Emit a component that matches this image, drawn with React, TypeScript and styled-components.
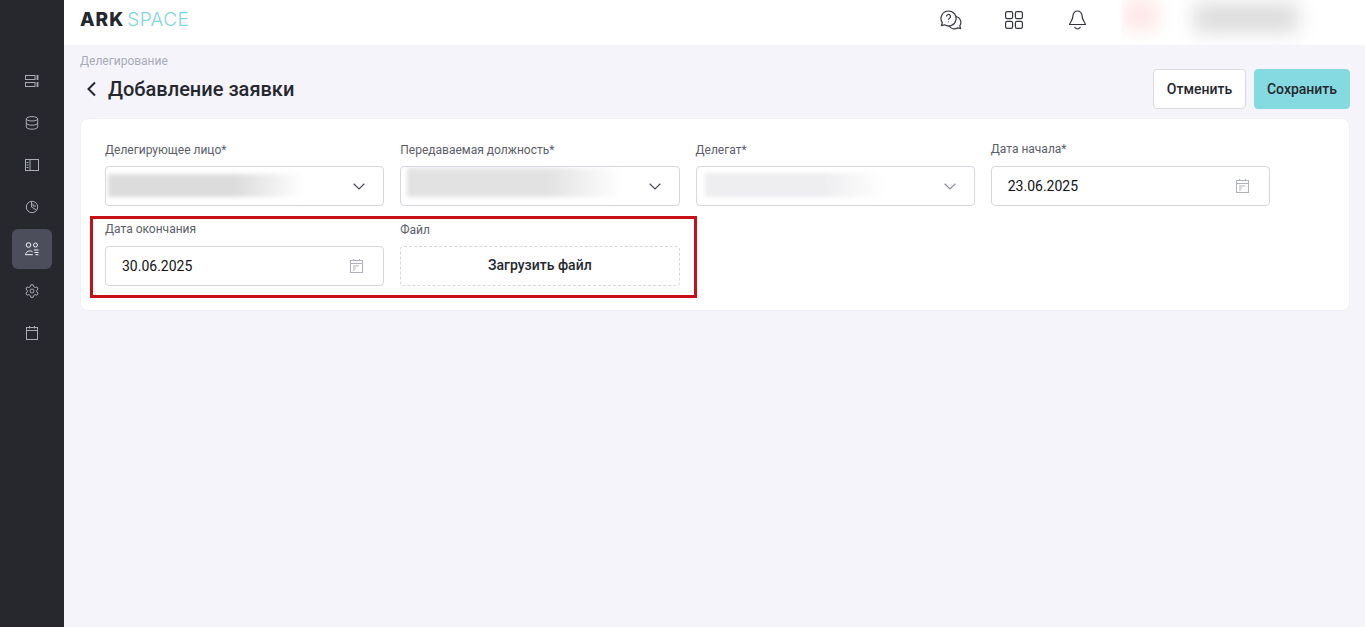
import styled, { createGlobalStyle } from 'styled-components'

const GlobalStyle = createGlobalStyle`
  html, body {
    margin: 0;
    padding: 0;
    height: 100%;
    overflow: hidden;
  }
  #root {
    height: 100%;
  }
  * {
    box-sizing: border-box;
  }
  body {
    font-family: Roboto, "Liberation Sans", sans-serif;
    background: #f4f4fa;
  }
`

const Page = styled.div`
  display: flex;
  height: 627px;
`

const Sidebar = styled.aside`
  width: 64px;
  flex: none;
  background: #26282e;
  display: flex;
  flex-direction: column;
  align-items: center;
  gap: 2px;
  padding-top: 61px;
`

const SideItem = styled.div<{ $active?: boolean }>`
  width: 40px;
  height: 40px;
  border-radius: 6px;
  display: flex;
  align-items: center;
  justify-content: center;
  color: ${p => (p.$active ? '#f2f2f6' : '#a9abb5')};
  background: ${p => (p.$active ? '#4c4e5c' : 'transparent')};
`

const Main = styled.div`
  flex: 1;
  min-width: 0;
  display: flex;
  flex-direction: column;
`

const Header = styled.header`
  height: 45px;
  flex: none;
  background: #fff;
  display: flex;
  align-items: center;
  padding: 0 16px;
`

const Logo = styled.div`
  display: flex;
  align-items: baseline;
  font-family: Inter, sans-serif;
  font-size: 19px;
  line-height: 40px;
  margin-top: -5px;
`

const LogoDark = styled.span`
  font-weight: 800;
  color: #25272e;
  letter-spacing: 1px;
`

const LogoLight = styled.span`
  font-weight: 300;
  color: #7fd6dd;
  margin-left: 3px;
  letter-spacing: 0.4px;
`

const HeaderIcons = styled.div`
  margin-left: auto;
  display: flex;
  align-items: center;
  gap: 41px;
  margin-right: 34px;
  margin-top: -5px;
  color: #33353c;
  height: 40px;
`

const HeaderIcon = styled.div`
  width: 22px;
  height: 22px;
  display: flex;
  align-items: center;
  justify-content: center;
`

const UserBlock = styled.div`
  width: 195px;
  height: 45px;
  display: flex;
  align-items: flex-start;
  overflow: hidden;
  margin-right: 32px;
`

const BlurAvatar = styled.div`
  width: 34px;
  height: 30px;
  margin-left: 2px;
  flex: none;
  background: #ffe6e6;
  filter: blur(9px);
`

const BlurName = styled.div`
  width: 104px;
  height: 28px;
  margin: 4px 0 0 36px;
  flex: none;
  background: #dadada;
  filter: blur(10px);
`

const Content = styled.main`
  flex: 1;
  padding: 8px 15px 0 16px;
`

const Breadcrumb = styled.div`
  font-size: 12px;
  line-height: 16px;
  color: #a8abb9;
`

const TitleRow = styled.div`
  display: flex;
  align-items: flex-start;
  justify-content: space-between;
  height: 49px;
`

const TitleGroup = styled.div`
  display: flex;
  align-items: center;
  gap: 9px;
  margin-top: 4px;
  padding-left: 5px;
  height: 32px;
`

const Title = styled.h1`
  margin: 0;
  font-size: 20px;
  line-height: 32px;
  font-weight: 500;
  color: #25272e;
`

const Actions = styled.div`
  display: flex;
  gap: 8px;
`

const Button = styled.button<{ $primary?: boolean; $width: number }>`
  width: ${p => p.$width}px;
  height: 40px;
  padding: 0;
  border-radius: 4px;
  font-family: inherit;
  font-size: 14px;
  font-weight: 500;
  color: #25272e;
  background: ${p => (p.$primary ? '#85d9e0' : '#fff')};
  border: 1px solid ${p => (p.$primary ? '#85d9e0' : '#d9dae2')};
`

const Card = styled.section`
  position: relative;
  background: #fff;
  border: 1px solid #f0f0f6;
  border-radius: 8px;
  padding: 23px 79px 24px 24px;
`

const FormGrid = styled.div`
  display: grid;
  grid-template-columns: repeat(4, 1fr);
  column-gap: 16px;
  row-gap: 16px;
`

const Field = styled.div`
  min-width: 0;
`

const Label = styled.label<{ $raised?: boolean }>`
  display: block;
  font-size: 12px;
  line-height: 16px;
  height: 16px;
  margin-bottom: 8px;
  color: #5c5e68;
  position: relative;
  top: ${p => (p.$raised ? '-1px' : '0')};
`

const Control = styled.div`
  height: 40px;
  background: #fff;
  border: 1px solid #d6d7df;
  border-radius: 4px;
  display: flex;
  align-items: center;
  justify-content: space-between;
  overflow: hidden;
`

const BlurValue = styled.div<{ $width: number; $left: number; $height: number; $lift: number; $color: string }>`
  width: ${p => p.$width}px;
  height: ${p => p.$height}px;
  margin-left: ${p => p.$left}px;
  margin-bottom: ${p => p.$lift}px;
  background: linear-gradient(90deg, ${p => p.$color} 65%, #fff 100%);
  filter: blur(2px);
`

const ChevronSlot = styled.div<{ $faded?: boolean }>`
  margin-right: 18px;
  display: flex;
  color: ${p => (p.$faded ? '#8c8e98' : '#4a4c55')};
`

const DateValue = styled.span`
  margin-left: 16px;
  font-size: 14px;
  color: #111114;
`

const CalendarSlot = styled.div`
  margin-right: 20px;
  display: flex;
  color: #b0b2bb;
`

const UploadBox = styled.div`
  height: 40px;
  background: #fff;
  border: 1px dashed #d6d7df;
  border-radius: 4px;
  display: flex;
  align-items: center;
  justify-content: center;
  padding-bottom: 2px;
  font-size: 14px;
  font-weight: 500;
  color: #25272e;
`

// red annotation frame lying over the second form row
const Highlight = styled.div`
  position: absolute;
  left: 9px;
  top: 97px;
  width: 607px;
  height: 82px;
  border: 3px solid #c90f16;
  pointer-events: none;
`

const SideIcon = ({ children }: { children: React.ReactNode }) => (
  <svg width="14" height="14" viewBox="0 0 14 14" fill="none" stroke="currentColor" strokeWidth="1">
    {children}
  </svg>
)

const CalendarIcon = () => (
  <svg width="13" height="14" viewBox="0 0 13 14" fill="none" stroke="currentColor" strokeWidth="1">
    <rect x="0.5" y="1.5" width="12" height="12" />
    <path d="M3.500 0v1.500M9.500 0v1.500M0.500 4.500h12" />
    <path d="M3 7h6M3 9h3M3 11h2" />
  </svg>
)

const Chevron = () => (
  <svg width="12" height="7" viewBox="0 0 12 7" fill="none" stroke="currentColor" strokeWidth="1.200">
    <path d="M0.700 0.800L6 6l5.300-5.200" />
  </svg>
)

const selectFields = [
  { label: 'Делегирующее лицо*', width: 195, left: 2, height: 23, lift: 1, color: '#dcdcdc', faded: false },
  { label: 'Передаваемая должность*', width: 215, left: 6, height: 29, lift: 7, color: '#e2e2e2', faded: false },
  { label: 'Делегат*', width: 182, left: 8, height: 24, lift: 2, color: '#eeeef0', faded: true },
]

function App() {
  return (
    <Page>
      <GlobalStyle />
      <Sidebar>
        <SideItem>
          <SideIcon>
            <rect x="0.5" y="1.5" width="9.500" height="4" />
            <rect x="0.5" y="8.5" width="9.500" height="4" />
            <path d="M12.500 1v5M12.500 8v5" strokeWidth="1.800" />
          </SideIcon>
        </SideItem>
        <SideItem>
          <SideIcon>
            <ellipse cx="7" cy="2.800" rx="5.700" ry="2.200" />
            <path d="M1.300 2.800v8.200c0 1.200 2.500 2.200 5.700 2.200s5.700-1 5.700-2.200V2.800M1.300 7c0 1.200 2.500 2.200 5.700 2.200s5.700-1 5.700-2.200" />
          </SideIcon>
        </SideItem>
        <SideItem>
          <SideIcon>
            <rect x="0.5" y="1.5" width="13" height="11" />
            <path d="M5 1.500v11M1.500 4.500h2M1.500 7h2M1.500 9.500h2" />
          </SideIcon>
        </SideItem>
        <SideItem>
          <SideIcon>
            <circle cx="7" cy="7" r="5.700" />
            <path d="M6.500 1.300V7l5 3M8 3.500V6h3" />
          </SideIcon>
        </SideItem>
        <SideItem $active>
          <SideIcon>
            <circle cx="3.500" cy="3" r="2.300" />
            <circle cx="10.500" cy="3" r="2" />
            <path d="M0.300 12.700h7.500M0.500 12.500C1 9.500 5 7.800 7.500 9.800M9 8h4.500M9.500 10.500h4M10.500 12.700h3" />
          </SideIcon>
        </SideItem>
        <SideItem>
          <SideIcon>
            <circle cx="7" cy="7" r="2" />
            <path d="M5.800 0.800h2.400l.4 1.800 1.500.9 1.800-.6 1.200 2.100-1.400 1.200v1.700l1.400 1.200-1.200 2.100-1.800-.6-1.500.9-.4 1.800H5.800l-.4-1.800-1.500-.9-1.800.6L.9 9.100l1.400-1.200V6.200L.9 5l1.200-2.100 1.800.6 1.500-.9z" />
          </SideIcon>
        </SideItem>
        <SideItem>
          <SideIcon>
            <rect x="1.500" y="1.500" width="11" height="12" />
            <path d="M1.500 4.500h11M4.500 0v2.500M9.500 0v2.500" />
          </SideIcon>
        </SideItem>
      </Sidebar>
      <Main>
        <Header>
          <Logo>
            <LogoDark>ARK</LogoDark>
            <LogoLight>SPACE</LogoLight>
          </Logo>
          <HeaderIcons>
            <HeaderIcon>
              <svg width="22" height="20" viewBox="0 0 22 20" fill="none" stroke="currentColor" strokeWidth="1.200">
                <path d="M8.500 1a7.500 7.500 0 0 0-6.200 11.700L1.500 15.500l3-.7A7.500 7.500 0 1 0 8.500 1z" />
                <path d="M16 6.500a6 6 0 0 1 3.800 9.300l.7 2.700-2.800-.7a6 6 0 0 1-8.700-2" />
                <path d="M6.500 6.500a2 2 0 1 1 3 1.700c-.7.400-1 .8-1 1.500M8.500 11.500v.8" />
              </svg>
            </HeaderIcon>
            <HeaderIcon>
              <svg width="18" height="18" viewBox="0 0 18 18" fill="none" stroke="currentColor" strokeWidth="1.200">
                <rect x="0.600" y="0.600" width="7" height="7" rx="1.600" />
                <rect x="10.400" y="0.600" width="7" height="7" rx="1.600" />
                <rect x="0.600" y="10.400" width="7" height="7" rx="1.600" />
                <rect x="10.400" y="10.400" width="7" height="7" rx="1.600" />
              </svg>
            </HeaderIcon>
            <HeaderIcon>
              <svg width="17" height="20" viewBox="0 0 17 20" fill="none" stroke="currentColor" strokeWidth="1.200">
                <path d="M8.500 1A4.500 4.500 0 0 0 4 5.500c0 5-3.400 7-3.400 9h15.800c0-2-3.400-4-3.400-9A4.500 4.500 0 0 0 8.500 1z" />
                <path d="M5.500 17c1 1.300 2 2 3 2s2-.7 3-2" />
              </svg>
            </HeaderIcon>
          </HeaderIcons>
          <UserBlock>
            <BlurAvatar />
            <BlurName />
          </UserBlock>
        </Header>
        <Content>
          <Breadcrumb>Делегирование</Breadcrumb>
          <TitleRow>
            <TitleGroup>
              <svg width="14" height="16" viewBox="0 0 14 16" fill="none" stroke="#25272e" strokeWidth="2">
                <path d="M10 1.500L3.500 8l6.500 6.500" />
              </svg>
              <Title>Добавление заявки</Title>
            </TitleGroup>
            <Actions>
              <Button $width={93}>Отменить</Button>
              <Button $width={96} $primary>
                Сохранить
              </Button>
            </Actions>
          </TitleRow>
          <Card>
            <FormGrid>
              {selectFields.map(f => (
                <Field key={f.label}>
                  <Label>{f.label}</Label>
                  <Control>
                    <BlurValue $width={f.width} $left={f.left} $height={f.height} $lift={f.lift} $color={f.color} />
                    <ChevronSlot $faded={f.faded}>
                      <Chevron />
                    </ChevronSlot>
                  </Control>
                </Field>
              ))}
              <Field>
                <Label $raised>Дата начала*</Label>
                <Control>
                  <DateValue>23.06.2025</DateValue>
                  <CalendarSlot>
                    <CalendarIcon />
                  </CalendarSlot>
                </Control>
              </Field>
              <Field>
                <Label $raised>Дата окончания</Label>
                <Control>
                  <DateValue>30.06.2025</DateValue>
                  <CalendarSlot>
                    <CalendarIcon />
                  </CalendarSlot>
                </Control>
              </Field>
              <Field>
                <Label>Файл</Label>
                <UploadBox>Загрузить файл</UploadBox>
              </Field>
            </FormGrid>
            <Highlight />
          </Card>
        </Content>
      </Main>
    </Page>
  )
}

export default App
